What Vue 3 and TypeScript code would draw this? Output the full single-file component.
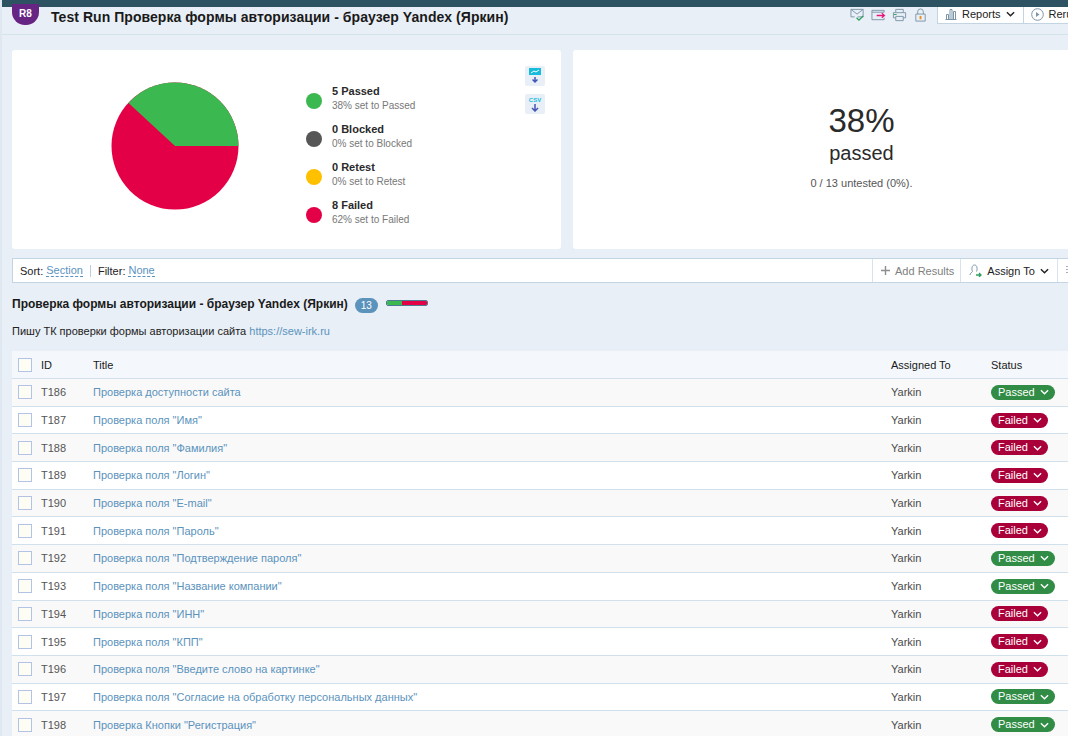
<script setup lang="ts">
interface TestRow {
  id: string
  title: string
  status: 'Passed' | 'Failed'
}

const legend = [
  { name: '5 Passed', note: '38% set to Passed', color: '#3cb850' },
  { name: '0 Blocked', note: '0% set to Blocked', color: '#565656' },
  { name: '0 Retest', note: '0% set to Retest', color: '#ffc000' },
  { name: '8 Failed', note: '62% set to Failed', color: '#e40046' },
]

const rows: TestRow[] = [
  { id: 'T186', title: 'Проверка доступности сайта', status: 'Passed' },
  { id: 'T187', title: 'Проверка поля "Имя"', status: 'Failed' },
  { id: 'T188', title: 'Проверка поля "Фамилия"', status: 'Failed' },
  { id: 'T189', title: 'Проверка поля "Логин"', status: 'Failed' },
  { id: 'T190', title: 'Проверка поля "E-mail"', status: 'Failed' },
  { id: 'T191', title: 'Проверка поля "Пароль"', status: 'Failed' },
  { id: 'T192', title: 'Проверка поля "Подтверждение пароля"', status: 'Passed' },
  { id: 'T193', title: 'Проверка поля "Название компании"', status: 'Passed' },
  { id: 'T194', title: 'Проверка поля "ИНН"', status: 'Failed' },
  { id: 'T195', title: 'Проверка поля "КПП"', status: 'Failed' },
  { id: 'T196', title: 'Проверка поля "Введите слово на картинке"', status: 'Failed' },
  { id: 'T197', title: 'Проверка поля "Согласие на обработку персональных данных"', status: 'Passed' },
  { id: 'T198', title: 'Проверка Кнопки "Регистрация"', status: 'Passed' },
]
</script>

<template>
  <div class="page">
    <div class="topbar"></div>

    <header class="head">
      <span class="run-badge">R8</span>
      <h1>Test Run Проверка формы авторизации - браузер Yandex (Яркин)</h1>
      <div class="head-actions">
        <svg class="hicon" viewBox="0 0 16 14" fill="none">
          <path d="M1 1h13v8H8M1 1v8h4M1 1l6.5 5L14 1" stroke="#7c95a8" />
          <path d="M7 10l2.5 2.5L14 8" stroke="#2f9e5f" stroke-width="1.4" />
        </svg>
        <svg class="hicon" viewBox="0 0 16 14" fill="none">
          <path d="M14 4V2H1v10h13v-2M1 4h13" stroke="#7c95a8" />
          <path d="M6 7.5h8M11.5 5l2.8 2.5L11.5 10" stroke="#e5187a" stroke-width="1.4" />
        </svg>
        <svg class="hicon" viewBox="0 0 16 14" fill="none">
          <path d="M4 4V1h8v3M4 10H1.5V4.5h13V10H12M4 8.5h8V13H4z" stroke="#7c95a8" />
          <path d="M2 6.5h3" stroke="#2f9e5f" />
        </svg>
        <svg class="hicon" viewBox="0 0 16 14" fill="none">
          <path d="M5 6V3.5a3 3 0 0 1 6 0V6M3 6h10v7.5H3z" stroke="#7c95a8" />
          <path d="M8 8v3.5" stroke="#f08a1d" stroke-width="2" />
        </svg>
        <div class="head-tabs">
          <button class="head-btn reports">
            <svg width="12" height="12" viewBox="0 0 12 12" fill="none" stroke="#7c95a8">
              <path d="M.5 11.5h11M1.5 11V6.500h2V11M5 11V1.500h2V11M8.500 11V3.500h2V11" />
            </svg>
            Reports
            <svg class="chev" viewBox="0 0 10 6" fill="none"><path d="M1 1l4 4 4-4" stroke="#222" stroke-width="1.600" /></svg>
          </button>
          <button class="head-btn rerun">
            <svg width="13" height="13" viewBox="0 0 13 13" fill="none">
              <circle cx="6.500" cy="6.500" r="5.800" stroke="#7c95a8" />
              <path d="M5 4l3.500 2.500L5 9z" fill="#7c95a8" />
            </svg>
            Rerun
          </button>
        </div>
      </div>
    </header>

    <section class="cards">
      <div class="card chart-card">
        <svg class="pie" width="128" height="128" viewBox="0 0 128 128">
          <circle cx="64" cy="64" r="63.500" fill="#e40046" />
          <path d="M64 64 L17.500 21 A63.500 63.500 0 0 1 64 .5 A63.500 63.500 0 0 1 127.500 64 Z" fill="#3cb850" />
        </svg>
        <ul class="legend">
          <li v-for="item in legend" :key="item.name">
            <span class="dot" :style="{ background: item.color }"></span>
            <div>
              <div class="legend-name">{{ item.name }}</div>
              <div class="legend-note">{{ item.note }}</div>
            </div>
          </li>
        </ul>
        <div class="exports">
          <span class="export">
            <svg width="14" height="16" viewBox="0 0 14 16">
              <rect x="1" y="0" width="12" height="7" fill="#17bcdc" />
              <path d="M3 5l3-2 2 1 3-2" stroke="#fff" fill="none" />
              <path d="M7 9v5M4.500 11.500L7 14l2.500-2.500" stroke="#4455b5" stroke-width="1.500" fill="none" />
            </svg>
          </span>
          <span class="export">
            <span class="csv">CSV</span>
            <svg width="10" height="8" viewBox="0 0 10 8">
              <path d="M5 0v6M2 4l3 3 3-3" stroke="#4455b5" stroke-width="1.500" fill="none" />
            </svg>
          </span>
        </div>
      </div>
      <div class="card stats-card">
        <div class="pct">38%</div>
        <div class="pct-label">passed</div>
        <div class="untested">0 / 13 untested (0%).</div>
      </div>
    </section>

    <div class="toolbar">
      <div class="sorting">
        <span>Sort:</span> <a class="dashed">Section</a>
        <span class="sep"></span>
        <span>Filter:</span> <a class="dashed">None</a>
      </div>
      <div class="tool add">
        <svg width="9" height="9" viewBox="0 0 9 9"><path d="M4.500 0v9M0 4.500h9" stroke="#8d8d8d" stroke-width="1.400" /></svg>
        Add Results
      </div>
      <div class="tool assign">
        <svg width="13" height="13" viewBox="0 0 13 13" fill="none">
          <path d="M1 11c0-2 2-2.500 2.500-3.500C2.500 6 2.500 1 5.500 1s3 5 2 6.500" stroke="#7c95a8" />
          <path d="M7 11h5M10 9l2 2-2 2" stroke="#2f9e5f" stroke-width="1.300" />
        </svg>
        Assign To
        <svg class="chev" viewBox="0 0 10 6" fill="none"><path d="M1 1l4 4 4-4" stroke="#222" stroke-width="1.600" /></svg>
      </div>
      <div class="tool more"><span class="grip"></span></div>
    </div>

    <div class="group-head">
      <h2>Проверка формы авторизации - браузер Yandex (Яркин)</h2>
      <span class="count">13</span>
      <span class="mini-bar"><i class="mini-pass"></i><i class="mini-fail"></i></span>
    </div>
    <p class="desc">Пишу ТК проверки формы авторизации сайта <a>https://sew-irk.ru</a></p>

    <div class="table">
      <div class="row header">
        <span class="box"></span>
        <span class="col-id">ID</span>
        <span class="col-title">Title</span>
        <span class="col-user">Assigned To</span>
        <span class="col-status">Status</span>
      </div>
      <div v-for="(row, i) in rows" :key="row.id" class="row" :class="{ odd: i % 2 === 0 }">
        <span class="box"></span>
        <span class="col-id">{{ row.id }}</span>
        <a class="col-title">{{ row.title }}</a>
        <span class="col-user">Yarkin</span>
        <span class="col-status">
          <span class="pill" :class="row.status === 'Passed' ? 'passed' : 'failed'">
            {{ row.status }}
            <svg viewBox="0 0 10 6" fill="none"><path d="M1 1l4 4 4-4" stroke="#fff" stroke-width="1.500" /></svg>
          </span>
        </span>
      </div>
    </div>
  </div>
</template>

<style>
html,
body {
  margin: 0;
  overflow: hidden;
}
</style>

<style scoped>
.page {
  width: 1068px;
  height: 736px;
  overflow: hidden;
  background: #e8eff6;
  border-left: 2px solid #dfe7f0;
  box-sizing: border-box;
  font-family: "Liberation Sans", Arial, sans-serif;
  font-size: 11px;
  color: #333;
}

.topbar {
  height: 7px;
  background: #2d5362;
  margin-left: -2px;
}

.head {
  height: 27px;
  display: flex;
  align-items: center;
  padding-left: 10px;
  border-bottom: 1px solid #d3e3ec;
  width: 1200px;
}

.run-badge {
  width: 27px;
  height: 21px;
  margin-top: -13px;
  padding-top: 2px;
  box-sizing: border-box;
  border-radius: 0 0 13px 13px;
  background: #662483;
  color: #fff;
  font-size: 10px;
  font-weight: 700;
  text-align: center;
  line-height: 15px;
}

h1 {
  margin: -7px 0 0 12px;
  font-size: 14px;
  line-height: 18px;
  font-weight: 700;
  color: #1a1a1a;
  letter-spacing: 0.05px;
}

.head-actions {
  position: absolute;
  top: 7px;
  left: 850px;
  display: flex;
  align-items: flex-start;
  gap: 6px;
  width: 300px;
}

.hicon {
  width: 15px;
  height: 14px;
  margin-top: 1px;
}

.head-tabs {
  display: flex;
  margin-left: 3px;
  height: 16px;
  background: #fff;
  border: 1px solid #c3d5e2;
  border-top: 0;
}

.head-btn {
  border: 0;
  padding: 0 7px;
  background: #fff;
  display: flex;
  align-items: center;
  gap: 5px;
  font: 11px "Liberation Sans", Arial, sans-serif;
  color: #222;
  height: 14px;
}

.reports {
  border-right: 1px solid #c3d5e2;
  height: 16px;
  padding: 0 8px 2px 7px;
}

.rerun {
  height: 16px;
  padding-bottom: 2px;
}

.chev {
  width: 9px;
  height: 6px;
}

.cards {
  display: flex;
  gap: 12px;
  padding: 15px 0 0 10px;
  width: 1200px;
}

.card {
  background: #fff;
  height: 199px;
  border-radius: 3px;
  box-sizing: border-box;
}

.chart-card {
  width: 549px;
  position: relative;
  display: flex;
  padding: 32px 0 0 99px;
}

.pie {
  flex: none;
}

.legend {
  list-style: none;
  margin: 0 0 0 67px;
  padding: 0;
}

.legend li {
  display: flex;
  align-items: center;
  gap: 10px;
  height: 38px;
  margin-top: 0;
}

.legend {
  margin-top: -2px;
}

.dot {
  width: 16px;
  height: 16px;
  border-radius: 50%;
  margin-top: 3px;
}

.legend-name {
  font-weight: 700;
  font-size: 11px;
  line-height: 14px;
  color: #2a2a2a;
}

.legend-note {
  font-size: 10px;
  line-height: 16px;
  color: #777;
}

.exports {
  position: absolute;
  top: 16px;
  left: 513px;
  display: flex;
  flex-direction: column;
  gap: 8px;
}

.export {
  width: 20px;
  height: 20px;
  background: #e8eff6;
  border-radius: 2px;
  display: flex;
  flex-direction: column;
  align-items: center;
  justify-content: center;
}

.csv {
  font-size: 6px;
  line-height: 7px;
  font-weight: 700;
  color: #17bcdc;
}

.stats-card {
  width: 620px;
  padding: 51px 0 0 0;
  text-align: center;
}

.stats-card > div {
  width: 577px;
}

.pct {
  font-size: 33px;
  line-height: 40px;
  color: #2a2a2a;
}

.pct-label {
  font-size: 20px;
  line-height: 24px;
  color: #2a2a2a;
}

.untested {
  margin-top: 11px;
  line-height: 14px;
  color: #555;
}

.toolbar {
  margin: 9px 0 0 10px;
  width: 1200px;
  height: 23px;
  background: #fff;
  border: 1px solid #c3d5e2;
  box-sizing: content-box;
  display: flex;
  align-items: center;
  color: #222;
}

.sorting {
  width: 852px;
  padding-left: 7px;
  flex: none;
  box-sizing: content-box;
  display: flex;
  align-items: center;
  gap: 3px;
}

.dashed {
  color: #5b93c0;
  border-bottom: 1px dashed #5b93c0;
  line-height: 12px;
}

.sep {
  width: 1px;
  height: 12px;
  background: #b9cfdf;
  margin: 0 4px;
}

.tool {
  height: 23px;
  display: flex;
  align-items: center;
  gap: 5px;
  padding: 0 6px 0 8px;
  border-left: 1px solid #d8e3ec;
}

.add {
  color: #808080;
}

.assign {
  padding-right: 8px;
}

.grip {
  width: 3px;
  height: 9px;
  background: repeating-linear-gradient(#aab 0 1px, transparent 1px 3px);
}

.group-head {
  display: flex;
  align-items: center;
  margin: 11px 0 0 10px;
  height: 20px;
}

h2 {
  margin: 0;
  font-size: 12px;
  font-weight: 700;
  color: #1a1a1a;
}

.count {
  margin: 3px 0 0 7px;
  width: 23px;
  height: 15px;
  border-radius: 8px;
  background: #5b93bd;
  color: #fff;
  text-align: center;
  font-size: 10px;
  line-height: 15px;
}

.mini-bar {
  display: flex;
  margin: -2px 0 0 8px;
  width: 42px;
  height: 6px;
  border: 1px solid #4e7a92;
  border-radius: 2px;
  box-sizing: border-box;
  overflow: hidden;
}

.mini-pass {
  width: 38%;
  background: #3cb850;
}

.mini-fail {
  flex: 1;
  background: #e40046;
}

.desc {
  margin: 10px 0 0 10px;
  font-size: 11px;
  line-height: 14px;
  color: #222;
}

.desc a {
  color: #5b93bd;
}

.table {
  margin: 13px 0 0 10px;
  width: 1200px;
}

.row {
  display: flex;
  align-items: center;
  height: 27.700px;
  box-sizing: border-box;
  background: #fff;
  border-bottom: 1px solid #d0e0ec;
}

.row.odd {
  background: #f9f9f9;
}

.row.header {
  height: 28px;
  background: #f4f8fc;
  color: #1a1a1a;
}

.box {
  flex: none;
  width: 12px;
  height: 12px;
  margin: 0 9px 0 6px;
  background: #fdfdf3;
  border: 1px solid #b3c3e6;
}

.col-id {
  width: 52px;
  flex: none;
  color: #555;
}

.col-title {
  width: 798px;
  flex: none;
  color: #5b93bd;
}

.col-user {
  width: 100px;
  flex: none;
  color: #4a4a4a;
}

.header .col-id,
.header .col-title,
.header .col-user,
.header .col-status {
  color: #1a1a1a;
}

.pill {
  display: inline-flex;
  align-items: center;
  gap: 5px;
  height: 15px;
  border-radius: 8px;
  padding: 0 6px 0 7px;
  color: #fff;
  font-size: 11px;
  line-height: 15px;
}

.pill svg {
  width: 9px;
  height: 6px;
}

.passed {
  background: #318c45;
}

.failed {
  background: #a9003a;
}
</style>
